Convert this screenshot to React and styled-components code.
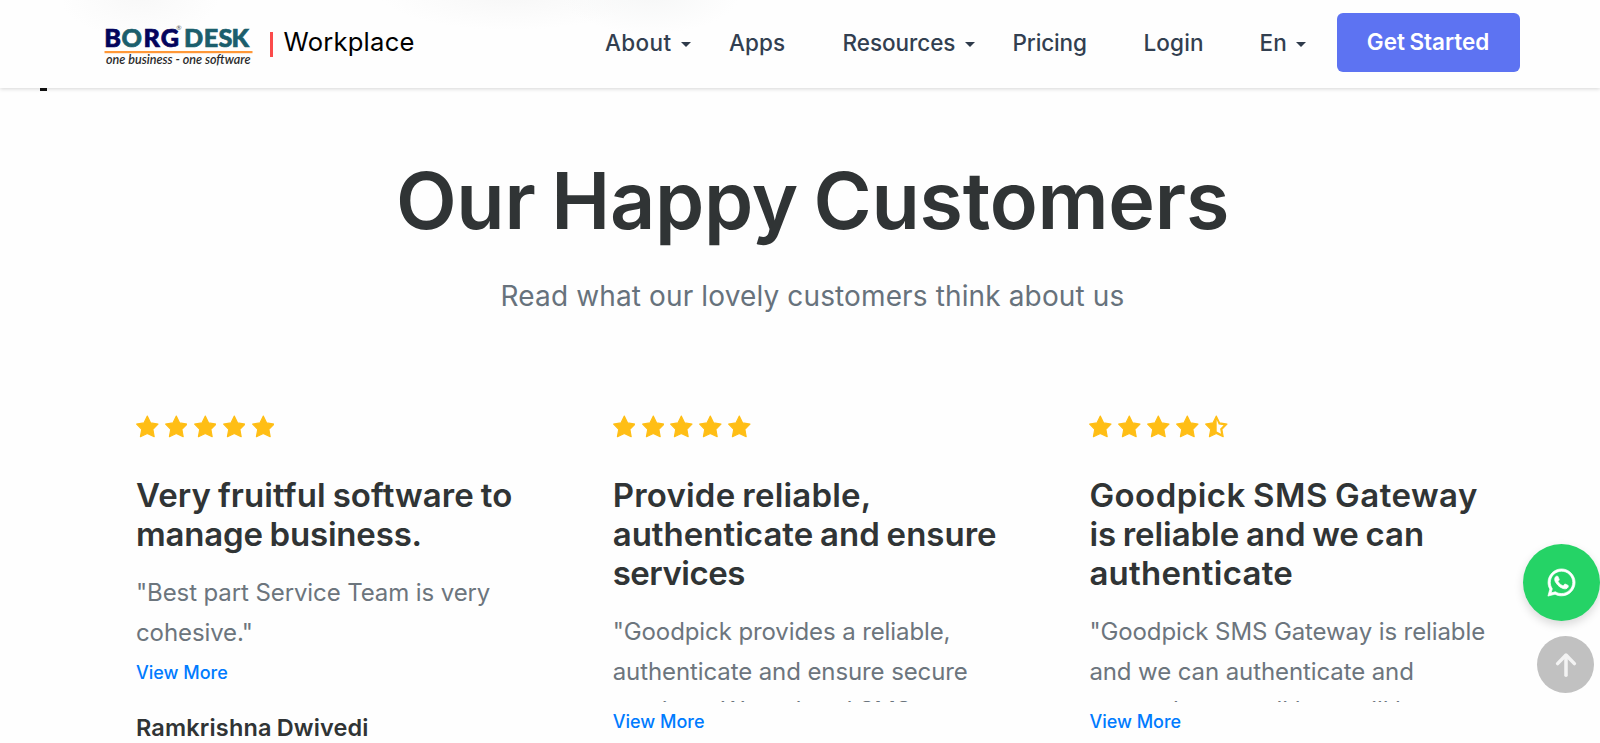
import React from 'react';
import styled, { createGlobalStyle } from 'styled-components';
import { FaWhatsapp } from 'react-icons/fa';

const navItems = [
    { label: 'About', width: 124, spacing: 0.35, dropdown: true },
    { label: 'Apps', width: 113.5, spacing: 0.1 },
    { label: 'Resources', width: 170, spacing: -0.05, dropdown: true },
    { label: 'Pricing', width: 131, spacing: -0.13 },
    { label: 'Login', width: 116, spacing: 0.14 },
    { label: 'En', width: 77, spacing: 0.1, dropdown: true },
];

const reviews = [
    {
        rating: 5,
        title: [
            ['Very fruitful software to', 0.09],
            ['manage business.', -0.18],
        ],
        text: ['"Best part Service Team is very', 'cohesive."'],
        author: 'Ramkrishna Dwivedi',
    },
    {
        rating: 5,
        title: [
            ['Provide reliable,', 0.2],
            ['authenticate and ensure', 0.01],
            ['services', -0.5],
        ],
        text: ['"Goodpick provides a reliable,', 'authenticate and ensure secure', 'services. We ordered SMS'],
    },
    {
        rating: 4.5,
        title: [
            ['Goodpick SMS Gateway', 0.46],
            ['is reliable and we can', -0.06],
            ['authenticate', 0.28],
        ],
        text: ['"Goodpick SMS Gateway is reliable', 'and we can authenticate and', 'ensure bonus call here will be'],
    },
];

const Logo = () => (
    <svg width="150" height="50" viewBox="0 0 150 50">
        <g fontFamily="Lato, sans-serif" fontWeight="900" fontSize="25.2" strokeWidth="0.7">
            <text x="0.3 17.6 39.6 56.8" y="27.6" fill="#04045c" stroke="#04045c">
                B<tspan fill="#1b5e6c" stroke="#1b5e6c">O</tspan>RG
            </text>
            <text x="80 99.7 114.4 127.4" y="27.6" fill="#1b5e6c" stroke="#1b5e6c">DESK</text>
        </g>
        <text x="72.2" y="10.6" fontFamily="Lato, sans-serif" fontSize="6.5" fill="#555">®</text>
        <rect x="0.5" y="32" width="148" height="2.2" fill="#ff9838" />
        <text
            x="2"
            y="44.8"
            textLength="144.5"
            lengthAdjust="spacingAndGlyphs"
            fontFamily="Lato, sans-serif"
            fontStyle="italic"
            fontWeight="600"
            fontSize="12.4"
            fill="#2b2b2b"
        >
            one business - one software
        </text>
    </svg>
);

const starPath = 'M11.3 1.1L14.7 7.9L22 9.1L16.9 14.3L18.2 21.7L11.3 18.4L4.4 21.7L5.7 14.3L0.6 9.1L7.9 7.9Z';

const Star = ({ half }) => (
    <svg width="22.6" height="23" viewBox="0 0 22.6 23">
        <path d={starPath} fill="#ffbe15" stroke="#ffbe15" strokeWidth="1.1" strokeLinejoin="round" />
        {half && <path d="M11.7 4.8L13.7 9.4L18.6 10.3L15.1 13.8L16 18.7L11.7 16.5Z" fill="#fefefe" />}
    </svg>
);

const Stars = ({ rating }) => (
    <StarRow>
        {[1, 2, 3, 4, 5].map((n) => <Star key={n} half={n > rating} />)}
    </StarRow>
);

const App = () => {
    return (
        <Page>
            <GlobalStyle />
            <Header>
                <Logo />
                <BrandBar />
                <BrandName>Workplace</BrandName>
                <Nav>
                    {navItems.map((item) => (
                        <NavItem key={item.label} $width={item.width} $spacing={item.spacing}>
                            {item.label}
                            {item.dropdown && <Caret />}
                        </NavItem>
                    ))}
                </Nav>
                <StartButton>Get Started</StartButton>
            </Header>
            <Marker />
            <Main>
                <Heading>Our Happy Customers</Heading>
                <SubHeading>Read what our lovely customers think about us</SubHeading>
            </Main>
            <Reviews>
                {reviews.map((review) => (
                    <Review key={review.title[0][0]}>
                        <Stars rating={review.rating} />
                        <ReviewTitle>
                            {review.title.map(([line, spacing]) => (
                                <TitleLine key={line} $spacing={spacing}>{line}</TitleLine>
                            ))}
                        </ReviewTitle>
                        <ReviewText>
                            {review.text.map((line) => (
                                <TextLine key={line}>{line}</TextLine>
                            ))}
                        </ReviewText>
                        <ViewMore>View More</ViewMore>
                        {review.author && <Author>{review.author}</Author>}
                    </Review>
                ))}
            </Reviews>
            <Floating>
                <WhatsappButton>
                    <FaWhatsapp stroke="currentColor" strokeWidth="12" />
                </WhatsappButton>
                <TopButton>
                    <svg width="26" height="30" viewBox="0 0 26 30" fill="none" stroke="#f3f3f3" strokeWidth="3.5">
                        <path d="M13 25.2V6" strokeLinecap="round" />
                        <path d="M4.6 13.6L13 5L21.4 13.6" strokeLinecap="round" strokeLinejoin="round" />
                    </svg>
                </TopButton>
            </Floating>
        </Page>
    );
};

export default App;

const GlobalStyle = createGlobalStyle`
  body {
    margin: 0;
    background: #fefefe;
    font-family: Inter, sans-serif;
  }
`;

const Page = styled.div`
  height: 743px;
  overflow: hidden;
`;

const Header = styled.header`
  display: flex;
  align-items: center;
  box-sizing: border-box;
  height: 88px;
  padding-left: 104px;
  background:
    radial-gradient(ellipse 80px 42px at 140px -4px, #f8f8f8, transparent),
    radial-gradient(ellipse 90px 40px at 650px -6px, #f6f7f7, transparent),
    radial-gradient(ellipse 130px 36px at 510px -6px, #f7f7f7, transparent),
    #fefefe;
  box-shadow: 0 1px 4px rgba(0, 0, 0, 0.16);

  & > * {
    flex-shrink: 0;
  }
`;

const BrandBar = styled.div`
  width: 3px;
  height: 25px;
  margin-left: 16px;
  background: #fb4b4b;
`;

const BrandName = styled.div`
  width: 321.5px;
  margin-left: 10.5px;
  font-size: 25.6px;
  line-height: 30px;
  letter-spacing: 0.22px;
  padding-bottom: 4px;
  color: #000;
`;

const Nav = styled.nav`
  display: flex;
`;

const NavItem = styled.a`
  display: flex;
  align-items: center;
  box-sizing: border-box;
  width: ${(props) => props.$width}px;
  padding-bottom: 2px;
  font-size: 22.5px;
  font-weight: 500;
  line-height: 30px;
  letter-spacing: ${(props) => props.$spacing}px;
  color: #323f50;
`;

const Caret = styled.span`
  margin: 3px 0 0 9.5px;
  border: 5px solid transparent;
  border-top-color: #2f3b4b;
  border-bottom: 0;
`;

const StartButton = styled.button`
  width: 183px;
  height: 59px;
  margin: 0 0 4px;
  padding: 0 0 1px;
  border: 0;
  border-radius: 6px;
  background: #5d73f2;
  color: #fff;
  font-family: inherit;
  font-size: 22.5px;
  font-weight: 600;
  letter-spacing: -0.04px;
  word-spacing: -1px;
`;

const Marker = styled.div`
  position: relative;
  width: 7px;
  height: 3px;
  margin-left: 40px;
  background: #111;
`;

const Main = styled.main`
  padding: 61px 0 0 25px;
  text-align: center;
`;

const Heading = styled.h1`
  margin: 0;
  font-size: 79px;
  font-weight: 600;
  line-height: 96px;
  letter-spacing: -0.25px;
  word-spacing: -4px;
  color: #303435;
`;

const SubHeading = styled.p`
  margin: 27px 0 0;
  font-size: 28px;
  line-height: 42px;
  letter-spacing: 0.13px;
  color: #67727c;
`;

const Reviews = styled.section`
  display: grid;
  grid-template-columns: repeat(3, 476.7px);
  padding: 97.5px 0 0 136px;
`;

const Review = styled.article`
  display: flex;
  flex-direction: column;
  align-items: flex-start;
`;

const StarRow = styled.div`
  display: flex;
  align-items: center;
  gap: 6.3px;
  height: 24px;
`;

const ReviewTitle = styled.h3`
  margin: 37.5px 0 19px;
  font-size: 33px;
  font-weight: 600;
  line-height: 39px;
  color: #303435;
`;

const TitleLine = styled.span`
  display: block;
  white-space: nowrap;
  letter-spacing: ${(props) => props.$spacing}px;
  word-spacing: -1.5px;
`;

const ReviewText = styled.p`
  max-height: 89.5px;
  margin: 0 0 6.5px;
  overflow: hidden;
  font-size: 24px;
  line-height: 39.6px;
  letter-spacing: -0.1px;
  color: #6c757d;
`;

const TextLine = styled.span`
  display: block;
  white-space: nowrap;
`;

const ViewMore = styled.a`
  font-size: 18px;
  font-weight: 500;
  line-height: 27px;
  color: #007bff;
`;

const Author = styled.h5`
  margin: 27.5px 0 0;
  font-size: 23.5px;
  font-weight: 600;
  line-height: 30px;
  letter-spacing: 0.15px;
  word-spacing: -1px;
  color: #303435;
`;

const Floating = styled.div`
  position: fixed;
  top: 544px;
  right: 0;
  display: flex;
  flex-direction: column;
  align-items: flex-end;
  gap: 15px;
`;

const RoundButton = styled.button`
  display: flex;
  align-items: center;
  justify-content: center;
  padding: 0;
  border: 0;
  border-radius: 50%;
`;

const WhatsappButton = styled(RoundButton)`
  width: 77px;
  height: 77px;
  background: #25d366;
  color: #fff;
  font-size: 31px;
  box-shadow: 0 4px 10px rgba(0, 0, 0, 0.15);
`;

const TopButton = styled(RoundButton)`
  width: 57px;
  height: 57px;
  margin-right: 6px;
  background: #c1c1c1;
`;
